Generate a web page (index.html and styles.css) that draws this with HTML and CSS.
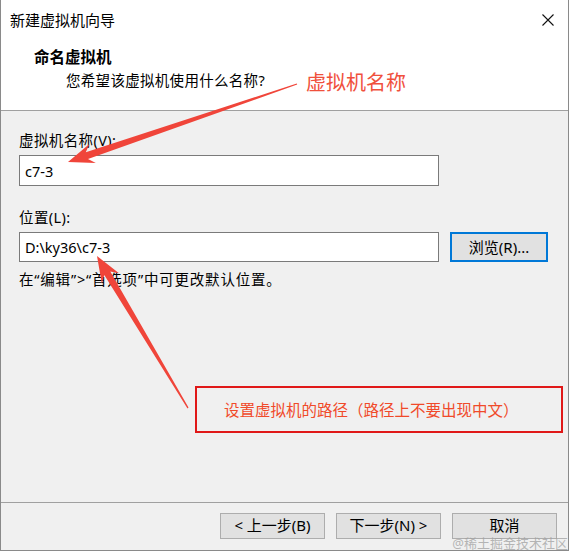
FILE: index.html
```html
<!DOCTYPE html>
<html lang="zh-CN">
<head>
<meta charset="utf-8">
<title>新建虚拟机向导</title>
<link rel="stylesheet" href="styles.css">
</head>
<body>
<div class="window">
  <div class="titlebar">
    <span class="title">新建虚拟机向导</span>
    <span class="close">
      <svg width="12" height="12" viewBox="0 0 12 12"><path d="M0.5 0.5 L11.5 11.5 M11.5 0.5 L0.5 11.5" stroke="#111" stroke-width="1.1" fill="none"/></svg>
    </span>
  </div>
  <div class="header">
    <div class="h-title">命名虚拟机</div>
    <div class="h-sub">您希望该虚拟机使用什么名称?</div>
  </div>
  <div class="content">
    <div class="label">虚拟机名称(V):</div>
    <div class="input name-input">c7-3</div>
    <div class="label label-loc">位置(L):</div>
    <div class="row">
      <div class="input loc-input">D:\ky36\c7-3</div>
      <button class="btn browse">浏览(R)...</button>
    </div>
    <div class="hint">在“编辑”&gt;“首选项”中可更改默认位置。</div>
  </div>
  <div class="footer">
    <button class="btn fbtn">&lt; 上一步(B)</button>
    <button class="btn fbtn">下一步(N) &gt;</button>
    <button class="btn fbtn">取消</button>
  </div>

  <div class="note-name">虚拟机名称</div>
  <div class="note-box">设置虚拟机的路径（路径上不要出现中文）</div>
  <svg class="arrows" width="570" height="551" viewBox="0 0 570 551">
    <polygon fill="#f0453a" points="297.2,84.6 88.0,158.9 95.8,163.1 68,162 89.4,144.1 85.8,152.3 296.8,83.4"/>
    <polygon fill="#f0453a" points="188.5,407.6 110.3,271.4 119.0,273.2 97,256 101.8,283.4 104.3,275.0 187.5,408.4"/>
  </svg>
  <div class="watermark">@稀土掘金技术社区</div>
</div>
</body>
</html>
```

FILE: styles.css
```css
* { box-sizing: border-box; }
html, body { margin: 0; padding: 0; background: #ffffff; }
body {
  font-family: "Noto Sans", "Noto Sans CJK SC", sans-serif;
  font-size: 14.5px;
  color: #000;
}
.window {
  position: relative;
  width: 569px;
  height: 551px;
  border-left: 1px solid #8a8a8a;
  border-right: 1px solid #8a8a8a;
  border-bottom: 1px solid #8a8a8a;
  display: flex;
  flex-direction: column;
  background: #f0f0f0;
  overflow: hidden;
}
.titlebar {
  height: 40px;
  background: #fff;
  display: flex;
  align-items: center;
  justify-content: space-between;
  padding: 0 14px 0 9px;
}
.title { font-size: 15px; line-height: 20px; }
.close { display: flex; align-items: center; width: 12px; height: 12px; }
.header {
  height: 71px;
  background: #fff;
  border-bottom: 1px solid #a0a0a0;
  padding: 7px 0 0 33px;
}
.h-title { font-weight: bold; font-size: 15.5px; line-height: 20px; }
.h-sub { padding-left: 32px; line-height: 20px; margin-top: 3px; letter-spacing: 0.3px; }
.content {
  flex: 1;
  padding: 19px 0 0 18px;
  border-bottom: 1px solid #a0a0a0;
}
.label { line-height: 20px; letter-spacing: 0.4px; }
.label-loc { margin-top: 21px; }
.input {
  background: #fff;
  border: 1px solid #7a7a7a;
  width: 420px;
  padding-left: 5px;
  display: flex;
  align-items: center;
}
.name-input { height: 31px; margin-top: 5px; }
.row { display: flex; gap: 11px; margin-top: 5px; align-items: center; }
.loc-input { height: 30px; }
.btn {
  font-family: inherit;
  font-size: 15px;
  line-height: 16px;
  background: #e1e1e1;
  border: 1px solid #adadad;
  color: #000;
  padding: 0;
}
.browse {
  width: 98px;
  height: 30px;
  border: 2px solid #0078d7;
}
.hint { line-height: 20px; margin-top: 7px; letter-spacing: 0.8px; }
.footer {
  height: 47px;
  display: flex;
  gap: 11px;
  padding: 10px 0 0 219px;
  align-items: flex-start;
}
.fbtn { width: 105px; height: 26px; padding-bottom: 2px; }
.note-name {
  position: absolute;
  left: 305px;
  top: 70px;
  font-size: 20px;
  line-height: 26px;
  color: #f0503c;
}
.note-box {
  position: absolute;
  left: 194px;
  top: 386px;
  width: 368px;
  height: 47px;
  border: 2px solid #e01818;
  color: #f04a2a;
  font-size: 15.5px;
  display: flex;
  align-items: center;
  padding: 0 0 0 27px;
}
.arrows { position: absolute; left: -1px; top: 0; pointer-events: none; }
.watermark {
  position: absolute;
  right: 0;
  bottom: 0;
  font-size: 13px;
  line-height: 13px;
  color: rgba(160,160,160,0.75);
}
```
